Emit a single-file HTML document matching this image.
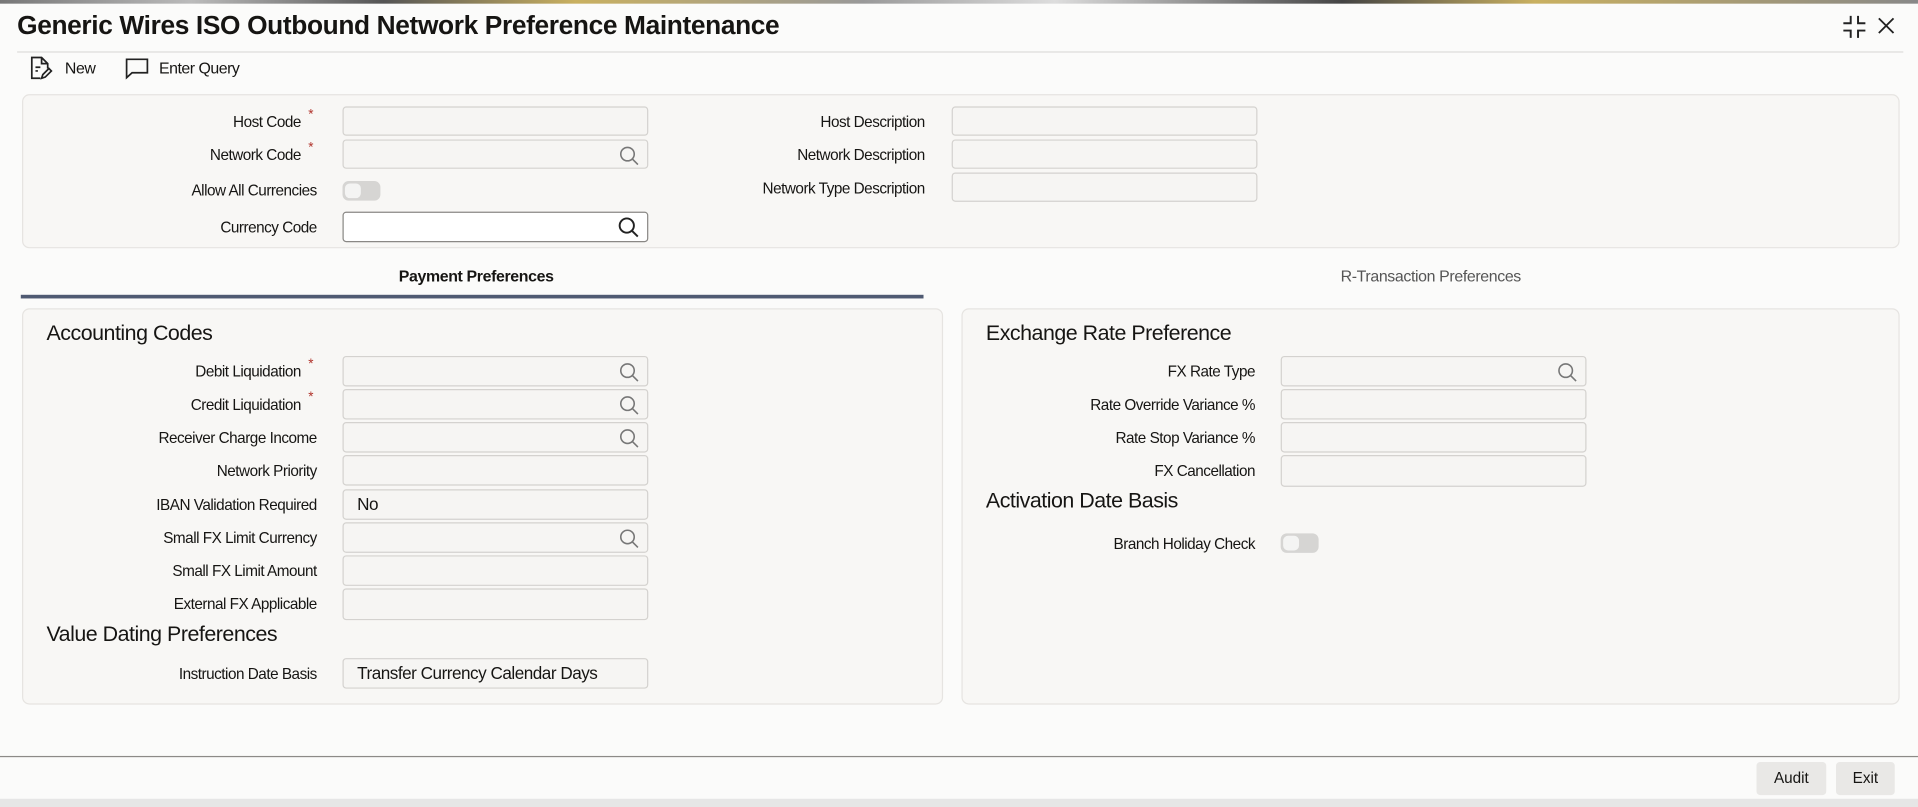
<!DOCTYPE html>
<html><head><meta charset="utf-8"><style>
html,body{margin:0;padding:0;width:1918px;height:807px;overflow:hidden;background:#fbfbfa;}
#w{position:absolute;left:0;top:0;width:1568px;height:660px;transform:scale(1.2232);transform-origin:0 0;font-family:"Liberation Sans",sans-serif;color:#161513;}
.a{position:absolute;}
.lbl{position:absolute;text-align:right;font-size:12.5px;letter-spacing:-0.4px;color:#161513;line-height:16px;}
.ast{position:absolute;color:#b0322a;font-size:11px;}
.in{position:absolute;height:24px;border:1px solid #d4d2cf;border-radius:3px;background:#f6f5f3;box-sizing:border-box;font-size:14px;letter-spacing:-0.4px;line-height:22px;padding-left:11px;color:#161513;}
.pnl{position:absolute;background:#f8f7f5;border:1px solid #e6e4e1;border-radius:6px;box-sizing:border-box;}
.h{position:absolute;font-size:17.5px;letter-spacing:-0.4px;color:#161513;}
.tg{position:absolute;width:31px;height:16px;border-radius:5px;background:#d6d5d3;}
.tg:after{content:"";position:absolute;left:2px;top:2px;width:13px;height:12px;border-radius:4px;background:#f4f4f3;}
.srch{position:absolute;right:6px;top:4px;}
</style></head><body><div id="w">
<div class="a" style="left:0;top:0;width:1568px;height:3px;background:linear-gradient(90deg,#777,#bbb 10%,#555 20%,#c9b060 30%,#999 45%,#ddd 55%,#444 70%,#c9b060 80%,#888 100%);"></div>
<div class="a" style="left:14px;top:9px;font-size:21.5px;font-weight:bold;letter-spacing:-0.3px;">Generic Wires ISO Outbound Network Preference Maintenance</div>
<div class="a" style="left:1506px;top:12px;width:20px;height:20px;">
<svg width="20" height="20" viewBox="0 0 20 20" fill="none" stroke="#222" stroke-width="1.6"><path d="M7 1v6H1M13 1v6h6M7 19v-6H1M13 19v-6h6"/></svg></div>
<svg class="a" style="left:1535px;top:14px" width="14" height="14" viewBox="0 0 14 14" fill="none" stroke="#222" stroke-width="1.5"><path d="M1 1l12 12M13 1L1 13"/></svg>
<div class="a" style="left:14px;top:42px;width:1542px;height:1px;background:#dddcda;"></div>
<svg class="a" style="left:24px;top:46px" width="20" height="20" viewBox="0 0 20 20" fill="none" stroke="#222" stroke-width="1.4"><path d="M9 18H2V1h8l5 5v4M10 1v5h5M5 9h4M5 12h2"/><path d="M10 18l1-3 5-5 2 2-5 5z"/></svg>
<div class="a" style="left:53px;top:48px;font-size:13px;letter-spacing:-0.3px;">New</div>
<svg class="a" style="left:102px;top:47px" width="20" height="18" viewBox="0 0 20 18" fill="none" stroke="#222" stroke-width="1.4"><path d="M1.5 1.5h17v11H6l-4.5 4z"/></svg>
<div class="a" style="left:130px;top:48px;font-size:13px;letter-spacing:-0.4px;">Enter Query</div>

<div class="pnl" style="left:18px;top:77px;width:1535px;height:126px;"></div>
<div class="lbl" style="right:1322px;top:92px;">Host Code</div><div class="ast" style="left:252px;top:88px;">*</div>
<div class="in" style="left:280px;top:87px;width:250px;"></div>
<div class="lbl" style="right:1322px;top:119px;">Network Code</div><div class="ast" style="left:252px;top:115px;">*</div>
<div class="in" style="left:280px;top:114px;width:250px;"><svg class="srch" width="17" height="17" viewBox="0 0 17 17" fill="none" stroke="#777" stroke-width="1.3"><circle cx="7" cy="7" r="5.5"/><path d="M11 11l4.5 4.5"/></svg></div>
<div class="lbl" style="right:1309px;top:148px;">Allow All Currencies</div>
<div class="tg" style="left:280px;top:148px;"></div>
<div class="lbl" style="right:1309px;top:178px;">Currency Code</div>
<div class="in" style="left:280px;top:173px;width:250px;height:25px;background:#fff;border-color:#8a8885;"><svg class="srch" width="18" height="18" viewBox="0 0 17 17" fill="none" stroke="#222" stroke-width="1.5" style="top:3px"><circle cx="7" cy="7" r="5.5"/><path d="M11 11l4.5 4.5"/></svg></div>
<div class="lbl" style="right:812px;top:92px;">Host Description</div>
<div class="in" style="left:778px;top:87px;width:250px;"></div>
<div class="lbl" style="right:812px;top:119px;">Network Description</div>
<div class="in" style="left:778px;top:114px;width:250px;"></div>
<div class="lbl" style="right:812px;top:146px;">Network Type Description</div>
<div class="in" style="left:778px;top:141px;width:250px;"></div>

<div class="a" style="left:326px;top:218px;font-size:13px;font-weight:bold;letter-spacing:-0.3px;">Payment Preferences</div>
<div class="a" style="left:17px;top:241px;width:738px;height:3px;background:#4f5a72;"></div>
<div class="a" style="left:1096px;top:218px;font-size:13px;color:#555;letter-spacing:-0.3px;">R-Transaction Preferences</div>

<div class="pnl" style="left:18px;top:252px;width:753px;height:324px;"></div>
<div class="h" style="left:38px;top:262px;">Accounting Codes</div>
<div class="lbl" style="right:1322px;top:296px;">Debit Liquidation</div><div class="ast" style="left:252px;top:292px;">*</div>
<div class="in" style="left:280px;top:291px;width:250px;height:25px;"><svg class="srch" width="17" height="17" viewBox="0 0 17 17" fill="none" stroke="#777" stroke-width="1.3"><circle cx="7" cy="7" r="5.5"/><path d="M11 11l4.5 4.5"/></svg></div>
<div class="lbl" style="right:1322px;top:323px;">Credit Liquidation</div><div class="ast" style="left:252px;top:319px;">*</div>
<div class="in" style="left:280px;top:318px;width:250px;height:25px;"><svg class="srch" width="17" height="17" viewBox="0 0 17 17" fill="none" stroke="#777" stroke-width="1.3"><circle cx="7" cy="7" r="5.5"/><path d="M11 11l4.5 4.5"/></svg></div>
<div class="lbl" style="right:1309px;top:350px;">Receiver Charge Income</div>
<div class="in" style="left:280px;top:345px;width:250px;height:25px;"><svg class="srch" width="17" height="17" viewBox="0 0 17 17" fill="none" stroke="#777" stroke-width="1.3"><circle cx="7" cy="7" r="5.5"/><path d="M11 11l4.5 4.5"/></svg></div>
<div class="lbl" style="right:1309px;top:377px;">Network Priority</div>
<div class="in" style="left:280px;top:372px;width:250px;height:25px;"></div>
<div class="lbl" style="right:1309px;top:405px;">IBAN Validation Required</div>
<div class="in" style="left:280px;top:400px;width:250px;height:25px;">No</div>
<div class="lbl" style="right:1309px;top:432px;">Small FX Limit Currency</div>
<div class="in" style="left:280px;top:427px;width:250px;height:25px;"><svg class="srch" width="17" height="17" viewBox="0 0 17 17" fill="none" stroke="#777" stroke-width="1.3"><circle cx="7" cy="7" r="5.5"/><path d="M11 11l4.5 4.5"/></svg></div>
<div class="lbl" style="right:1309px;top:459px;">Small FX Limit Amount</div>
<div class="in" style="left:280px;top:454px;width:250px;height:25px;"></div>
<div class="lbl" style="right:1309px;top:486px;">External FX Applicable</div>
<div class="in" style="left:280px;top:481px;width:250px;height:26px;"></div>
<div class="h" style="left:38px;top:508px;">Value Dating Preferences</div>
<div class="lbl" style="right:1309px;top:543px;">Instruction Date Basis</div>
<div class="in" style="left:280px;top:538px;width:250px;height:25px;">Transfer Currency Calendar Days</div>

<div class="pnl" style="left:786px;top:252px;width:767px;height:324px;"></div>
<div class="h" style="left:806px;top:262px;">Exchange Rate Preference</div>
<div class="lbl" style="right:542px;top:296px;">FX Rate Type</div>
<div class="in" style="left:1047px;top:291px;width:250px;height:25px;"><svg class="srch" width="17" height="17" viewBox="0 0 17 17" fill="none" stroke="#777" stroke-width="1.3"><circle cx="7" cy="7" r="5.5"/><path d="M11 11l4.5 4.5"/></svg></div>
<div class="lbl" style="right:542px;top:323px;">Rate Override Variance %</div>
<div class="in" style="left:1047px;top:318px;width:250px;height:25px;"></div>
<div class="lbl" style="right:542px;top:350px;">Rate Stop Variance %</div>
<div class="in" style="left:1047px;top:345px;width:250px;height:25px;"></div>
<div class="lbl" style="right:542px;top:377px;">FX Cancellation</div>
<div class="in" style="left:1047px;top:372px;width:250px;height:26px;"></div>
<div class="h" style="left:806px;top:399px;">Activation Date Basis</div>
<div class="lbl" style="right:542px;top:437px;">Branch Holiday Check</div>
<div class="tg" style="left:1047px;top:436px;"></div>

<div class="a" style="left:0;top:618px;width:1568px;height:1px;background:#8c8a87;"></div>
<div class="a" style="left:1436px;top:623px;width:57px;height:27px;background:#e9e8e6;border-radius:3px;font-size:12.5px;text-align:center;line-height:27px;">Audit</div>
<div class="a" style="left:1501px;top:623px;width:48px;height:27px;background:#e9e8e6;border-radius:3px;font-size:12.5px;text-align:center;line-height:27px;">Exit</div>
<div class="a" style="left:0;top:653px;width:1568px;height:7px;background:#e6e6e6;"></div>
</div></body></html>
